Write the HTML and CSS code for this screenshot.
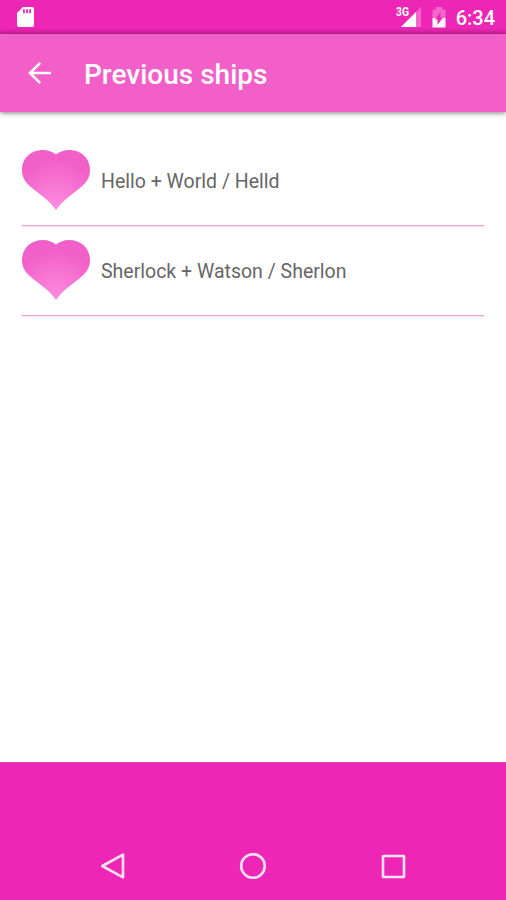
FILE: index.html
```html
<!DOCTYPE html>
<html lang="en">
<head>
<meta charset="utf-8">
<title>Previous ships</title>
<link rel="stylesheet" href="styles.css">
</head>
<body>
<header class="status">
  <svg class="sd" width="17" height="20" viewBox="0 0 17 20"><path fill="#fff" fill-rule="evenodd" d="M6 0h9a2 2 0 0 1 2 2v16a2 2 0 0 1-2 2H2a2 2 0 0 1-2-2V6zM6 2.200v4h1.800v-4zm3.100 0v4h1.800v-4zm3.100 0v4H14v-4z"/></svg>
  <div class="signal">
    <span class="network">3G</span>
    <svg width="20" height="20" viewBox="0 0 20 20"><path fill="#fff" opacity=".3" d="M20 0v20H0z"/><path fill="#fff" d="M15 5v15H0z"/></svg>
  </div>
  <svg class="battery" width="14" height="21" viewBox="0 0 14 21"><path fill="#fff" opacity=".3" d="M4 0h6v2.500h3.500V11H.5V2.500H4z"/><path fill="#fff" d="M.5 11h13v9.500H.5z"/><path fill="#ee26b5" d="M8.500 5v5.500H11L5.500 18v-5.500H3z"/></svg>
  <span class="clock">6:34</span>
</header>
<div class="toolbar">
  <svg class="back" width="24" height="24" viewBox="0 0 24 24" fill="none" stroke="#fff" stroke-width="2.6"><path d="M23 12H2.500M12.200 1.800L2 12l10.200 10.200"/></svg>
  <h1 class="title">Previous ships</h1>
</div>
<main class="list">
  <div class="row">
    <svg class="heart" width="68" height="61" viewBox="0 0 68 61">
      <defs><radialGradient id="pink" gradientUnits="userSpaceOnUse" cx="34" cy="58" r="48"><stop offset="0" stop-color="#ff8be0"/><stop offset=".45" stop-color="#f878d5"/><stop offset="1" stop-color="#f15fc8"/></radialGradient></defs>
      <path fill="url(#pink)" d="M34 4.500C30 1.500 26 0 21 0C8 0 0 9 0 20C0 28 4 33 10 38L24 49Q30 54 34 60Q38 54 44 49L58 38C64 33 68 28 68 20C68 9 60 0 47 0C42 0 38 1.500 34 4.500z"/>
    </svg>
    <span class="label">Hello + World / Helld</span>
  </div>
  <div class="row">
    <svg class="heart" width="68" height="61" viewBox="0 0 68 61">
      <path fill="url(#pink)" d="M34 4.500C30 1.500 26 0 21 0C8 0 0 9 0 20C0 28 4 33 10 38L24 49Q30 54 34 60Q38 54 44 49L58 38C64 33 68 28 68 20C68 9 60 0 47 0C42 0 38 1.500 34 4.500z"/>
    </svg>
    <span class="label">Sherlock + Watson / Sherlon</span>
  </div>
</main>
<footer class="bottom">
  <nav class="nav">
    <svg width="28" height="28" viewBox="0 0 28 28"><path d="M24 2.700v22.600L3.300 14z"/></svg>
    <svg width="28" height="28" viewBox="0 0 28 28"><circle cx="14" cy="14" r="11.800"/></svg>
    <svg width="28" height="28" viewBox="0 0 28 28"><rect x="4" y="4" width="21" height="21" rx=".5"/></svg>
  </nav>
</footer>
</body>
</html>
```

FILE: styles.css
```css
* { box-sizing: border-box; }

body {
  margin: 0;
  height: 900px;
  display: flex;
  flex-direction: column;
  background: #fff;
  font-family: Roboto, sans-serif;
  overflow: hidden;
}

svg { display: block; flex: none; }

.status {
  height: 34px;
  flex: none;
  display: flex;
  align-items: flex-start;
  padding: 7px 11px 0 17px;
  background: linear-gradient(#ee26b5 28px, #d022a0);
  color: #fff;
}

.signal {
  position: relative;
  margin-left: auto;
}

.network {
  position: absolute;
  right: 12px;
  top: -1px;
  font-size: 12px;
  line-height: 12px;
  font-weight: 700;
  transform: scaleX(.86);
  transform-origin: right;
}

.battery { margin: 0 10px 0 11px; }

.clock {
  font-size: 20px;
  line-height: 22px;
  font-weight: 500;
}

.toolbar {
  height: 78px;
  flex: none;
  display: flex;
  align-items: center;
  padding-left: 28px;
  background: #f25fc8;
  box-shadow: 0 1px 5px rgba(0, 0, 0, .5);
}

.title {
  margin: 3px 0 0 32px;
  font-size: 28px;
  line-height: 34px;
  font-weight: 500;
  color: #fff;
}

.list {
  flex: 1;
  padding: 25px 22px 0;
}

.row {
  height: 90px;
  display: flex;
  align-items: center;
  gap: 11px;
  background: linear-gradient(#ee9bd6 1px, #fbe3f4 1px) bottom / 100% 2px no-repeat;
}

.heart { margin-top: -3px; }

.label {
  font-size: 19.500px;
  line-height: 24px;
  color: #666;
}

.bottom {
  height: 138px;
  flex: none;
  display: flex;
  align-items: flex-end;
  border-top: 1px solid #df3db0;
  background: #ee26b5;
}

.nav {
  flex: 1;
  display: flex;
  justify-content: center;
  gap: 112px;
  padding-bottom: 20px;
  fill: none;
  stroke: #ffe4f7;
  stroke-width: 2.600;
  stroke-linejoin: round;
}
```
